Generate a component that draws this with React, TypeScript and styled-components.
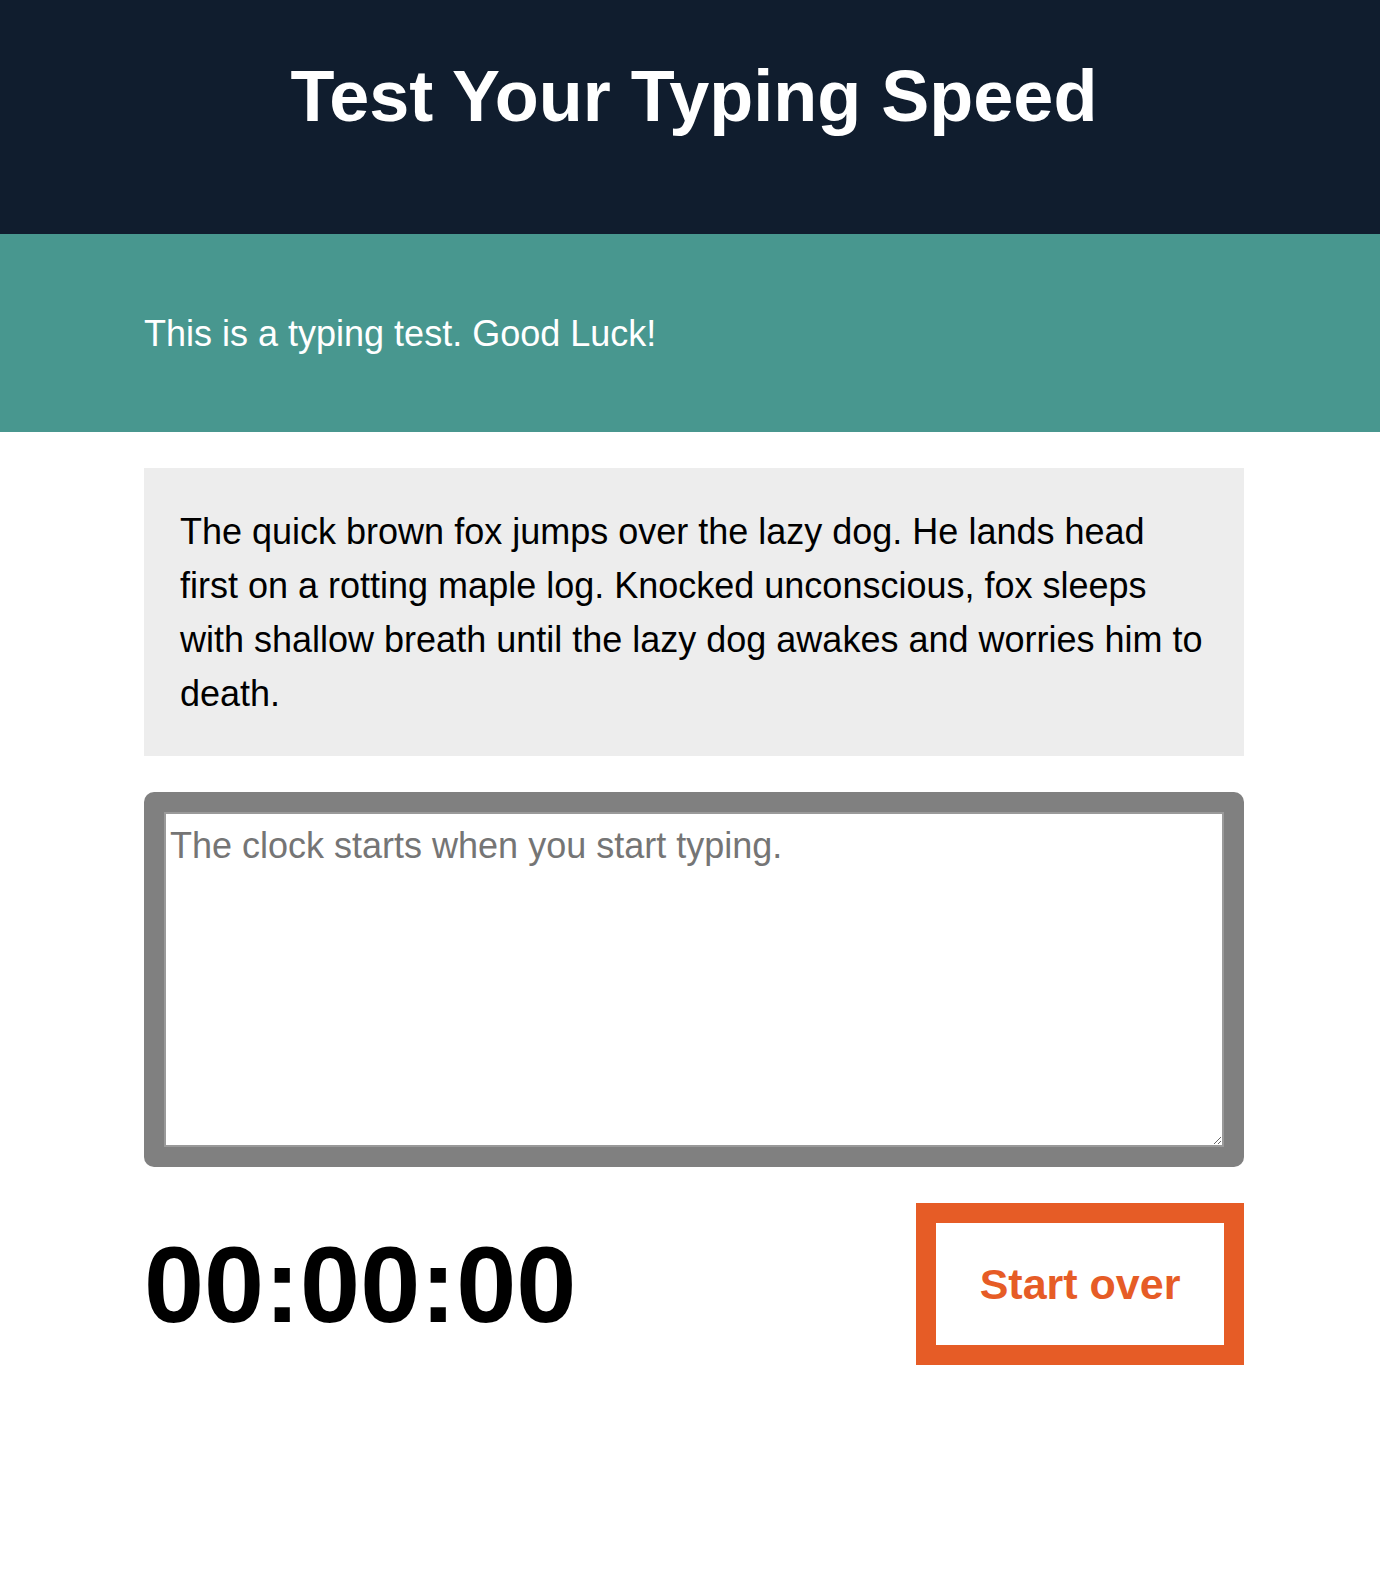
import React from "react";
import styled, { createGlobalStyle } from "styled-components";

const GlobalStyle = createGlobalStyle`
  html, body {
    margin: 0;
    padding: 0;
    background: #ffffff;
  }
  body {
    font-family: "Liberation Sans", Arial, Helvetica, sans-serif;
    font-size: 36px;
    color: #000000;
  }
`;

const Page = styled.div`
  min-height: 1586px;
  background: #ffffff;
`;

const Column = styled.div`
  max-width: 1100px;
  padding-left: 8px;
  margin: 0 auto;
`;

const Masthead = styled.header`
  background: #101d2e;
  padding: 53px 0 95px;
`;

const Title = styled.h1`
  margin: 0;
  font-size: 72px;
  line-height: 86px;
  font-weight: 700;
  color: #ffffff;
  text-align: center;
`;

const Intro = styled.section`
  background: #48978f;
  padding: 73px 0 71px;
`;

const IntroText = styled.p`
  margin: 0;
  font-size: 36px;
  line-height: 54px;
  color: #ffffff;
`;

const Main = styled.main`
  padding-top: 36px;
`;

const Passage = styled.p`
  margin: 0;
  background: #ededed;
  padding: 37px 36px 35px;
  font-size: 36px;
  line-height: 54px;
  color: #000000;
`;

const InputFrame = styled.div`
  margin-top: 36px;
  background: #808080;
  padding: 20px;
  border-radius: 10px;
`;

const TypingArea = styled.textarea`
  display: block;
  box-sizing: border-box;
  width: 100%;
  height: 335px;
  margin: 0;
  padding: 5px 4px 0;
  border: 2px solid #9a9a9a;
  background: #ffffff;
  font-family: "Liberation Sans", Arial, Helvetica, sans-serif;
  font-size: 36px;
  line-height: 54px;
  color: #000000;
  outline: none;

  &::placeholder {
    color: #757575;
  }
`;

const Controls = styled.div`
  margin-top: 36px;
  display: flex;
  justify-content: space-between;
  align-items: center;
`;

const Timer = styled.div`
  font-size: 108px;
  font-weight: 700;
  line-height: normal;
  color: #000000;
`;

const ResetButton = styled.button`
  box-sizing: border-box;
  width: 328px;
  height: 162px;
  display: flex;
  align-items: center;
  justify-content: center;
  padding: 0;
  border: 20px solid #e65c26;
  background: #ffffff;
  color: #e65c26;
  font-family: "Liberation Sans", Arial, Helvetica, sans-serif;
  font-size: 43px;
  font-weight: 700;
  cursor: pointer;
`;

export default function App() {
  return (
    <Page>
      <GlobalStyle />
      <Masthead>
        <Column>
          <Title>Test Your Typing Speed</Title>
        </Column>
      </Masthead>
      <Intro>
        <Column>
          <IntroText>This is a typing test. Good Luck!</IntroText>
        </Column>
      </Intro>
      <Column>
        <Main>
          <Passage>
            The quick brown fox jumps over the lazy dog. He lands head first on a
            rotting maple log. Knocked unconscious, fox sleeps with shallow breath
            until the lazy dog awakes and worries him to death.
          </Passage>
          <InputFrame>
            <TypingArea placeholder="The clock starts when you start typing." />
          </InputFrame>
          <Controls>
            <Timer>00:00:00</Timer>
            <ResetButton type="button">Start over</ResetButton>
          </Controls>
        </Main>
      </Column>
    </Page>
  );
}
